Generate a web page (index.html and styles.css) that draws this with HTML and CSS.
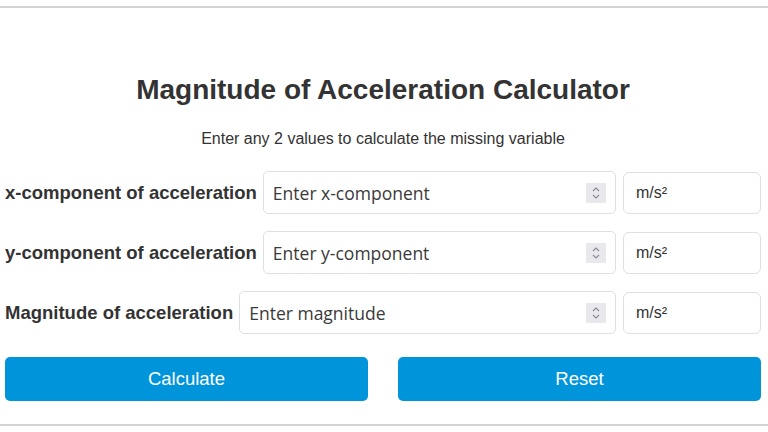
FILE: index.html
```html
<!DOCTYPE html>
<html lang="en">
<head>
<meta charset="utf-8">
<title>Magnitude of Acceleration Calculator</title>
<link rel="stylesheet" href="styles.css">
</head>
<body>
<div class="calc">
  <h1 class="title">Magnitude of Acceleration Calculator</h1>
  <p class="subtitle">Enter any 2 values to calculate the missing variable</p>

  <div class="row">
    <label class="label" for="ax">x-component of acceleration</label>
    <div class="field">
      <input class="num" id="ax" type="text" placeholder="Enter x-component">
      <span class="spin"><svg width="10" height="16" viewBox="0 0 10 16"><path d="M2 6 L5 3 L8 6" /><path d="M2 10 L5 13 L8 10" /></svg></span>
    </div>
    <div class="unit">m/s²</div>
  </div>

  <div class="row">
    <label class="label" for="ay">y-component of acceleration</label>
    <div class="field">
      <input class="num" id="ay" type="text" placeholder="Enter y-component">
      <span class="spin"><svg width="10" height="16" viewBox="0 0 10 16"><path d="M2 6 L5 3 L8 6" /><path d="M2 10 L5 13 L8 10" /></svg></span>
    </div>
    <div class="unit">m/s²</div>
  </div>

  <div class="row">
    <label class="label" for="am">Magnitude of acceleration</label>
    <div class="field">
      <input class="num" id="am" type="text" placeholder="Enter magnitude">
      <span class="spin"><svg width="10" height="16" viewBox="0 0 10 16"><path d="M2 6 L5 3 L8 6" /><path d="M2 10 L5 13 L8 10" /></svg></span>
    </div>
    <div class="unit">m/s²</div>
  </div>

  <div class="buttons">
    <button class="btn" type="button">Calculate</button>
    <button class="btn" type="button">Reset</button>
  </div>
</div>
</body>
</html>
```

FILE: styles.css
```css
html, body {
  margin: 0;
  padding: 0;
  background: #ffffff;
}
body {
  font-family: "Liberation Sans", Arial, sans-serif;
  color: #333333;
}
.calc {
  margin-top: 6px;
  height: 416px;
  border-top: 2px solid #d4d4d4;
  border-bottom: 2px solid #d4d4d4;
  padding: 0 7px 0 5px;
}
.title {
  margin: 66px 0 0;
  font-size: 28px;
  line-height: 32px;
  font-weight: bold;
  text-align: center;
  color: #333333;
}
.subtitle {
  margin: 24px 0 0;
  font-size: 16px;
  line-height: 18px;
  text-align: center;
  color: #333333;
}
.row {
  display: flex;
  align-items: center;
  gap: 6px;
  margin-top: 17px;
}
.subtitle + .row {
  margin-top: 23px;
}
.label {
  font-size: 18.5px;
  font-weight: bold;
  white-space: nowrap;
  color: #333333;
}
.field {
  flex: 1;
  height: 43px;
  box-sizing: border-box;
  display: flex;
  align-items: center;
  border: 1px solid #dcdfe6;
  border-radius: 5px;
  padding: 0 9px 0 0;
}
.num {
  flex: 1;
  min-width: 0;
  border: none;
  outline: none;
  background: transparent;
  padding: 0 0 0 9px;
  font-family: "Open Sans", "Noto Sans", sans-serif;
  font-size: 17.5px;
  color: #333333;
}
.num::placeholder {
  color: #3a3a3a;
  opacity: 1;
}
.spin {
  width: 20px;
  height: 20px;
  background: #e9e9ed;
  display: flex;
  align-items: center;
  justify-content: center;
}
.spin svg path {
  fill: none;
  stroke: #8a8a90;
  stroke-width: 1.1;
}
.unit {
  width: 138px;
  height: 42px;
  margin-left: 1px;
  box-sizing: border-box;
  border: 1px solid #dcdfe6;
  border-radius: 6px;
  display: flex;
  align-items: center;
  padding-left: 12px;
  font-size: 16px;
  color: #333333;
}
.buttons {
  display: flex;
  gap: 30px;
  margin-top: 23px;
}
.btn {
  flex: 1;
  height: 44px;
  border: none;
  border-radius: 5px;
  background: #0095da;
  color: #ffffff;
  font-family: "Liberation Sans", Arial, sans-serif;
  font-size: 18.5px;
}
```
